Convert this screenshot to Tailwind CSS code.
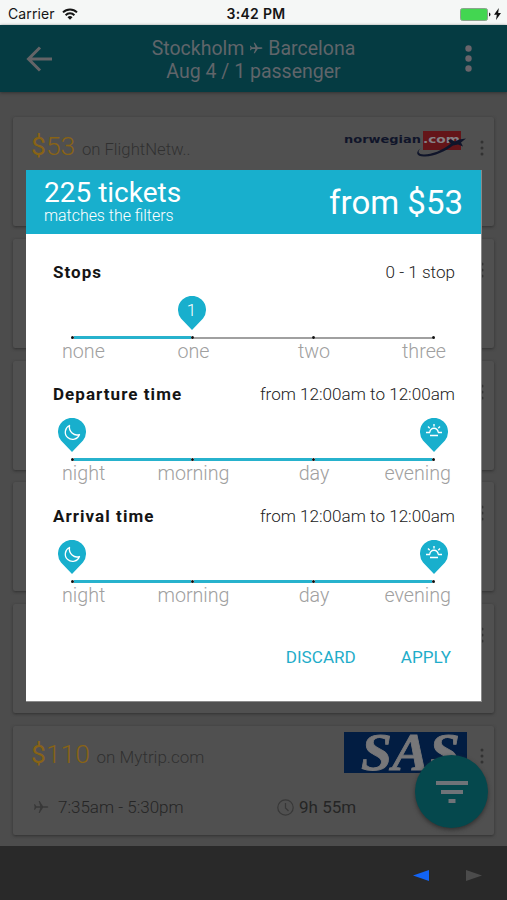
<!DOCTYPE html>
<html lang="en">
<head>
    <meta charset="UTF-8">
    <meta name="viewport" content="width=device-width, initial-scale=1.0">
    <title>Flight Tickets - Filters</title>
    <script src="https://cdn.jsdelivr.net/npm/@tailwindcss/browser@4"></script>
</head>
<body class="bg-[#4c4c4c] font-['Roboto',sans-serif]">
<div class="relative flex flex-col w-[507px] h-[900px] overflow-hidden whitespace-nowrap">

    <!-- Status Bar -->
    <div class="h-[25px] shrink-0 bg-[#f5f7f6] grid grid-cols-3 items-center pt-[3px] px-2 text-[#151515] text-[14px] leading-none">
        <div class="flex items-center gap-[7px]">
            <span class="font-['Inter',sans-serif] text-[14px] tracking-[.1px]">Carrier</span>
            <svg class="w-4 h-3" viewBox="0 0 16 12" fill="none" stroke="#151515" stroke-width="2">
                <path d="M1 4.4a10 10 0 0 1 14 0M3.6 7.2a6.2 6.2 0 0 1 8.8 0"/>
                <path d="M8 11.8 5.5 9.2a3.6 3.6 0 0 1 5 0z" fill="#151515" stroke="none"/>
            </svg>
        </div>
        <span class="justify-self-center pl-[5px] font-['Inter',sans-serif] font-semibold text-[14px] tracking-[.3px]">3:42 PM</span>
        <div class="flex justify-end items-center gap-[3px] -mr-[2px]">
            <svg class="w-[31px] h-[13px]" viewBox="0 0 31 13">
                <rect x=".5" y=".5" width="27" height="12" rx="2" fill="#43d651" stroke="#8aa58c"/>
                <path d="M29 4.500c2 .8 2 3.200 0 4z" fill="#222"/>
            </svg>
            <svg class="w-[7px] h-3" viewBox="0 0 7 12"><path d="M4.800 0 0 6.800h2.800L2 12l5-7H4.200z" fill="#111"/></svg>
        </div>
    </div>

    <!-- App Header -->
    <header class="h-[67px] shrink-0 bg-[#053b42] shadow-[0_1px_3px_#333] flex items-center justify-between pl-[26px] pr-[35px] text-[#60656a]">
        <svg class="w-[26px] h-[26px]" viewBox="0 0 26 26" fill="none" stroke="#646467" stroke-width="3"><path d="M14 1.500 2.500 13 14 24.500M2 13h24"/></svg>
        <div class="text-center text-[19.500px] leading-[23px] pt-[2px] pr-[10px]">
            <p class="flex items-center justify-center gap-[5px]">Stockholm
                <svg class="w-[14px] h-[14px]" viewBox="0 0 24 24" fill="#60656a"><path d="M23 12c0-1-1-1.500-2.500-1.500H15L10 3H8l3 7.500H5L3 8H1.500L2.500 12l-1 4H3l2-2.500h6L8 21h2l5-7.500h5.500c1.500 0 2.500-.5 2.500-1.500z"/></svg>
                Barcelona</p>
            <p>Aug 4 / 1 passenger</p>
        </div>
        <svg class="w-[7px] h-[27px]" viewBox="0 0 7 27" fill="#69646a"><circle cx="3.500" cy="3.500" r="3.200"/><circle cx="3.500" cy="13.500" r="3.200"/><circle cx="3.500" cy="23.500" r="3.200"/></svg>
    </header>

    <!-- Ticket List -->
    <main class="flex-1 flex flex-col gap-[12.800px] pt-[25px] px-[13px]">
        <div class="h-[109px] shrink-0 bg-[#505050] rounded-xs shadow-[0_1px_3px_#303030] flex justify-between pl-[18px] pr-[10px]">
            <p class="mt-[11px] h-9 text-[26.500px] leading-9 text-[#886315]">$<span class="font-light">53</span> <span class="text-[16.700px] font-light text-[#303030]">on FlightNetw..</span></p>
            <div class="flex items-start mt-[12px] gap-[13px]">
                <svg class="w-[124px] h-[32px]" viewBox="0 0 124 32">
                    <rect x="80" y="2" width="38" height="19" fill="#641519"/>
                    <g font-family="DejaVu Sans" font-weight="bold" font-size="10.500">
                        <text x="1" y="14" fill="#10152a" textLength="77" lengthAdjust="spacingAndGlyphs">norwegian</text>
                        <text x="80" y="14" fill="#858085" textLength="37" lengthAdjust="spacingAndGlyphs">.com</text>
                    </g>
                    <path d="M78 19c-6 4-5 9 4 8.500 10-.5 20-5 28-11l5-1 5 2-2-4 5-4-7 1-4 2-4-2-3 1 3 3c-9 7-19 11-27 11-6 0-7-3-3-6.500z" fill="#10152a"/>
                </svg>
                <svg class="mt-[11px] w-1 h-4" viewBox="0 0 4 16" fill="#323232"><circle cx="2" cy="2" r="1.500"/><circle cx="2" cy="8" r="1.500"/><circle cx="2" cy="14" r="1.500"/></svg>
            </div>
        </div>
        <div class="h-[109px] shrink-0 bg-[#505050] rounded-xs shadow-[0_1px_3px_#303030] flex justify-end pt-[23px] pr-[10px]">
            <svg class="w-1 h-4" viewBox="0 0 4 16" fill="#323232"><circle cx="2" cy="2" r="1.500"/><circle cx="2" cy="8" r="1.500"/><circle cx="2" cy="14" r="1.500"/></svg>
        </div>
        <div class="h-[109px] shrink-0 bg-[#505050] rounded-xs shadow-[0_1px_3px_#303030] flex justify-end pt-[23px] pr-[10px]">
            <svg class="w-1 h-4" viewBox="0 0 4 16" fill="#323232"><circle cx="2" cy="2" r="1.500"/><circle cx="2" cy="8" r="1.500"/><circle cx="2" cy="14" r="1.500"/></svg>
        </div>
        <div class="h-[109px] shrink-0 bg-[#505050] rounded-xs shadow-[0_1px_3px_#303030] flex justify-end pt-[23px] pr-[10px]">
            <svg class="w-1 h-4" viewBox="0 0 4 16" fill="#323232"><circle cx="2" cy="2" r="1.500"/><circle cx="2" cy="8" r="1.500"/><circle cx="2" cy="14" r="1.500"/></svg>
        </div>
        <div class="h-[109px] shrink-0 bg-[#505050] rounded-xs shadow-[0_1px_3px_#303030] flex justify-end pt-[23px] pr-[10px]">
            <svg class="w-1 h-4" viewBox="0 0 4 16" fill="#323232"><circle cx="2" cy="2" r="1.500"/><circle cx="2" cy="8" r="1.500"/><circle cx="2" cy="14" r="1.500"/></svg>
        </div>
        <div class="h-[109px] shrink-0 bg-[#505050] rounded-xs shadow-[0_1px_3px_#303030] pl-[18px] pr-[10px]">
            <div class="flex justify-between h-[69px]">
                <p class="mt-[10px] h-9 text-[26.500px] leading-9 text-[#886315]">$<span class="font-light">110</span> <span class="text-[17px] font-light text-[#303030]">on Mytrip.com</span></p>
                <div class="flex items-start mt-[6px] gap-[13px]">
                    <svg class="w-[123px] h-[41px] overflow-visible" viewBox="0 0 123 41">
                        <rect width="123" height="41" fill="#021d42"/>
                        <text x="17" y="38" fill="#777779" stroke="#777779" stroke-width=".8" font-family="Liberation Serif" font-weight="bold" font-style="italic" font-size="53" textLength="99" lengthAdjust="spacingAndGlyphs">SAS</text>
                    </svg>
                    <svg class="mt-[16px] w-1 h-4" viewBox="0 0 4 16" fill="#323232"><circle cx="2" cy="2" r="1.500"/><circle cx="2" cy="8" r="1.500"/><circle cx="2" cy="14" r="1.500"/></svg>
                </div>
            </div>
            <div class="flex items-center h-[25px] text-[17px] text-[#252525]">
                <svg class="ml-[2px] w-[16px] h-[16px]" viewBox="0 0 24 24" fill="#383838"><path d="M23 12c0-.8-1-1.200-2.500-1.200H15L10 3H8.500l2.500 7.800H5L3 8H1.500L2.500 12l-1 4H3l2-2.800h6L8.500 21H10l5-7.800h5.500c1.500 0 2.500-.4 2.500-1.200z"/></svg>
                <span class="ml-[9px] w-[219px] font-light">7:35am - 5:30pm</span>
                <svg class="w-[17px] h-[17px]" viewBox="0 0 17 17" fill="none" stroke="#383838" stroke-width="1.200"><circle cx="8.500" cy="8.500" r="7.700"/><path d="M8.500 4v5l3 3"/></svg>
                <span class="ml-[5px]">9h 55m</span>
            </div>
        </div>
    </main>

    <!-- Bottom Toolbar -->
    <footer class="h-[54px] shrink-0 bg-[#292929] flex items-center justify-end gap-[37px] pr-[25px] pt-[4px]">
        <svg class="w-4 h-[11px]" viewBox="0 0 16 11"><path d="M16 0v11L0 5.500z" fill="#1264f5"/></svg>
        <svg class="w-4 h-[11px]" viewBox="0 0 16 11"><path d="M0 0v11l16-5.500z" fill="#4b4b4b"/></svg>
    </footer>

    <!-- Filter Button -->
    <div class="absolute left-[415px] top-[755px] size-[73px] rounded-full bg-[#05484d] shadow-[0_2px_4px_#303030] flex items-center justify-center">
        <svg class="w-[32px] h-[22px]" viewBox="0 0 32 22" fill="#6f7378"><path d="M0 0h32v4H0zM5 9h22v4H5zM12.500 18h7v4h-7z"/></svg>
    </div>

    <!-- Filter Dialog -->
    <div class="absolute left-[26px] top-[170px] w-[456px] h-[532px] bg-white border-b border-r border-[#8a8a8a] flex flex-col">
        <div class="h-[64px] shrink-0 bg-[#18afcd] text-white flex justify-between items-center pl-[18px] pr-[18px]">
            <div class="-mt-[2px]">
                <h1 class="text-[28px] leading-[30px]">225 tickets</h1>
                <p class="text-[15.900px] leading-[16px] font-light">matches the filters</p>
            </div>
            <p class="text-[33px] leading-none">from $53</p>
        </div>

        <div class="pt-[28px] pl-[27px] pr-[26px]">
            <!-- Stops -->
            <section class="h-[122px]">
                <div class="flex justify-between items-center h-[22px]">
                    <h2 class="text-[17px] font-bold text-[#151515] tracking-[1.050px]">Stops</h2>
                    <span class="text-[17.100px] font-light text-[#222]">0 - 1 stop</span>
                </div>
                <div class="mt-[12px] pl-[125px] h-[34px]">
                    <svg class="w-[28px] h-[34px]" viewBox="0 0 28 34"><path d="M14 34 3 22.500A14 14 0 1 1 25 22.500z" fill="#18afcd"/><text x="13.500" y="20" fill="#fff" font-family="Roboto" font-weight="300" font-size="17" text-anchor="middle">1</text></svg>
                </div>
                <div class="mt-[6px] ml-[18px] w-[364px] h-[3px] flex items-center">
                    <i class="size-[3px] rounded-full bg-[#111]"></i><i class="flex-1 h-[3px] bg-[#27b2cd]"></i>
                    <i class="size-[3px] rounded-full bg-[#111]"></i><i class="flex-1 h-[2px] bg-[#a0a0a0]"></i>
                    <i class="size-[3px] rounded-full bg-[#111]"></i><i class="flex-1 h-[2px] bg-[#a0a0a0]"></i>
                    <i class="size-[3px] rounded-full bg-[#111]"></i>
                </div>
                <div class="grid grid-cols-[80px_111px_122px_89px] mt-[3px] pl-[9px] h-5 leading-5 text-[19.700px] font-light text-[#a0a0a0] text-center">
                    <span class="text-left">none</span><span class="-ml-2">one</span><span>two</span><span class="text-right pr-[18px]">three</span>
                </div>
            </section>

            <!-- Departure time -->
            <section class="h-[122px]">
                <div class="flex justify-between items-center h-[22px]">
                    <h2 class="text-[17px] font-bold text-[#151515] tracking-[1.050px]">Departure time</h2>
                    <span class="text-[17.100px] font-light text-[#222]">from 12:00am to 12:00am</span>
                </div>
                <div class="mt-[12px] ml-[5px] w-[390px] h-[34px] flex justify-between">
                    <svg class="w-[28px] h-[34px]" viewBox="0 0 28 34"><path d="M14 34 3 22.500A14 14 0 1 1 25 22.500z" fill="#18afcd"/><path d="M11.500 7.500A7.300 7.300 0 1 0 21.500 16.500C16 18.500 10.500 13.500 11.500 7.500z" fill="none" stroke="#fff" stroke-width="1.300" stroke-linejoin="round"/></svg>
                    <svg class="w-[28px] h-[34px]" viewBox="0 0 28 34" fill="none" stroke="#fff" stroke-width="1.400"><path d="M14 34 3 22.500A14 14 0 1 1 25 22.500z" fill="#18afcd" stroke="none"/><path d="M9.800 14.500a4.200 4.200 0 0 1 8.400 0M6 14.500h4M18 14.500h4M10 17.500h8M14 6v2.500M8 8.500l1.700 1.700M20 8.500l-1.700 1.700"/></svg>
                </div>
                <div class="mt-[6px] ml-[18px] w-[364px] h-[3px] flex items-center">
                    <i class="size-[3px] rounded-full bg-[#111]"></i><i class="flex-1 h-[3px] bg-[#27b2cd]"></i>
                    <i class="size-[3px] rounded-full bg-[#111]"></i><i class="flex-1 h-[3px] bg-[#27b2cd]"></i>
                    <i class="size-[3px] rounded-full bg-[#111]"></i><i class="flex-1 h-[3px] bg-[#27b2cd]"></i>
                    <i class="size-[3px] rounded-full bg-[#111]"></i>
                </div>
                <div class="grid grid-cols-[80px_111px_122px_89px] mt-[3px] pl-[9px] h-5 leading-5 text-[19.700px] font-light text-[#a0a0a0] text-center">
                    <span class="text-left">night</span><span class="-ml-2">morning</span><span>day</span><span class="text-right pr-[13px]">evening</span>
                </div>
            </section>

            <!-- Arrival time -->
            <section class="h-[122px]">
                <div class="flex justify-between items-center h-[22px]">
                    <h2 class="text-[17px] font-bold text-[#151515] tracking-[1.050px]">Arrival time</h2>
                    <span class="text-[17.100px] font-light text-[#222]">from 12:00am to 12:00am</span>
                </div>
                <div class="mt-[12px] ml-[5px] w-[390px] h-[34px] flex justify-between">
                    <svg class="w-[28px] h-[34px]" viewBox="0 0 28 34"><path d="M14 34 3 22.500A14 14 0 1 1 25 22.500z" fill="#18afcd"/><path d="M11.500 7.500A7.300 7.300 0 1 0 21.500 16.500C16 18.500 10.500 13.500 11.500 7.500z" fill="none" stroke="#fff" stroke-width="1.300" stroke-linejoin="round"/></svg>
                    <svg class="w-[28px] h-[34px]" viewBox="0 0 28 34" fill="none" stroke="#fff" stroke-width="1.400"><path d="M14 34 3 22.500A14 14 0 1 1 25 22.500z" fill="#18afcd" stroke="none"/><path d="M9.800 14.500a4.200 4.200 0 0 1 8.400 0M6 14.500h4M18 14.500h4M10 17.500h8M14 6v2.500M8 8.500l1.700 1.700M20 8.500l-1.700 1.700"/></svg>
                </div>
                <div class="mt-[6px] ml-[18px] w-[364px] h-[3px] flex items-center">
                    <i class="size-[3px] rounded-full bg-[#111]"></i><i class="flex-1 h-[3px] bg-[#27b2cd]"></i>
                    <i class="size-[3px] rounded-full bg-[#111]"></i><i class="flex-1 h-[3px] bg-[#27b2cd]"></i>
                    <i class="size-[3px] rounded-full bg-[#111]"></i><i class="flex-1 h-[3px] bg-[#27b2cd]"></i>
                    <i class="size-[3px] rounded-full bg-[#111]"></i>
                </div>
                <div class="grid grid-cols-[80px_111px_122px_89px] mt-[3px] pl-[9px] h-5 leading-5 text-[19.700px] font-light text-[#a0a0a0] text-center">
                    <span class="text-left">night</span><span class="-ml-2">morning</span><span>day</span><span class="text-right pr-[13px]">evening</span>
                </div>
            </section>
        </div>

        <!-- Dialog Actions -->
        <div class="flex justify-end items-center gap-[45px] mt-[20px] pr-[30px] h-5 text-[17.100px] text-[#1fadca]">
            <button>DISCARD</button>
            <button>APPLY</button>
        </div>
    </div>

</div>
</body>
</html>
